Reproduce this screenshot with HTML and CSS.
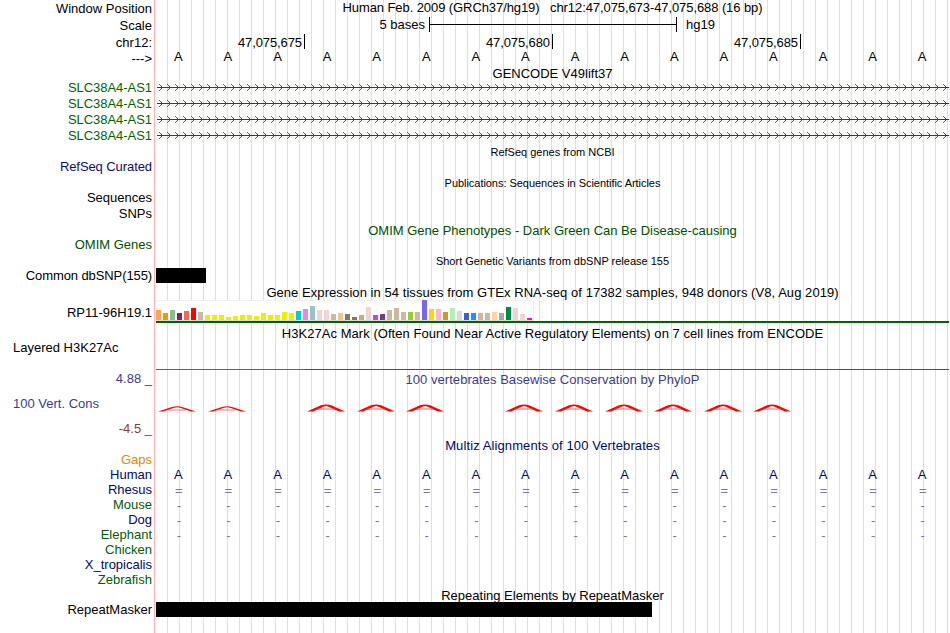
FILE: index.html
```html
<!DOCTYPE html>
<html lang="en">
<head>
<meta charset="utf-8">
<title>Genome Browser chr12:47,075,673-47,075,688</title>
<link rel="stylesheet" href="styles.css">
</head>
<body>
<main class="browser">
  <section class="labels">
    <div class="label gap1">Window Position</div>
    <div class="label gap2">Scale</div>
    <div class="label gap2">chr12:</div>
    <div class="label gap1">---&gt;</div>
    <div class="label gene gap14">SLC38A4-AS1</div>
    <div class="label gene gap1">SLC38A4-AS1</div>
    <div class="label gene gap1">SLC38A4-AS1</div>
    <div class="label gene gap1">SLC38A4-AS1</div>
    <div class="label refseq gap16">RefSeq Curated</div>
    <div class="label gap16">Sequences</div>
    <div class="label gap1">SNPs</div>
    <div class="label omim gap16">OMIM Genes</div>
    <div class="label tight gap16">Common dbSNP(155)</div>
    <div class="label gap22">RP11-96H19.1</div>
    <div class="label left gap20">Layered H3K27Ac</div>
    <div class="label cons gap16">4.88 _</div>
    <div class="label cons left gap10">100 Vert. Cons</div>
    <div class="label negative gap10">-4.5 _</div>
    <div class="label gaps gap16">Gaps</div>
    <div class="label navy">Human</div>
    <div class="label navy">Rhesus</div>
    <div class="label green">Mouse</div>
    <div class="label navy">Dog</div>
    <div class="label green">Elephant</div>
    <div class="label green">Chicken</div>
    <div class="label navy">X_tropicalis</div>
    <div class="label green">Zebrafish</div>
    <div class="label gap15">RepeatMasker</div>
  </section>
  <section class="plot">
    <div class="title t-position">Human Feb. 2009 (GRCh37/hg19) &nbsp; chr12:47,075,673-47,075,688 (16 bp)</div>
    <div class="scale"><span class="scale-size">5 bases</span><span class="scale-bar"></span><span>hg19</span></div>
    <div class="ruler"><span class="tick">47,075,675</span><span class="tick">47,075,680</span><span class="tick">47,075,685</span></div>
    <div class="bases" data-symbol="A"></div>
    <div class="title t-gencode">GENCODE V49lift37</div>
    <svg class="transcripts" width="793" height="64" viewBox="0 0 793 64" shape-rendering="crispEdges">
      <defs>
        <pattern id="chevrons" x="0" y="0" width="8" height="16" patternUnits="userSpaceOnUse">
          <path d="M3 3h1v1h-1zM4 4h1v1h-1zM4 8h1v1h-1zM3 9h1v1h-1z" fill="#2c802c"/>
          <path d="M5 5h1v1h-1zM5 7h1v1h-1z" fill="#106e10"/>
          <path d="M0 6h8v1h-8z" fill="#006400"/>
        </pattern>
      </defs>
      <rect x="1" width="792" height="64" fill="url(#chevrons)"/>
    </svg>
    <div class="title small t-refseq">RefSeq genes from NCBI</div>
    <div class="title small t-pubs">Publications: Sequences in Scientific Articles</div>
    <div class="title omim t-omim">OMIM Gene Phenotypes - Dark Green Can Be Disease-causing</div>
    <div class="title small t-dbsnp">Short Genetic Variants from dbSNP release 155</div>
    <div class="block snp"></div>
    <div class="title t-gtex">Gene Expression in 54 tissues from GTEx RNA-seq of 17382 samples, 948 donors (V8, Aug 2019)</div>
    <div class="gtex"><div class="gtex-bars" id="gtex"></div></div>
    <div class="title t-h3k">H3K27Ac Mark (Often Found Near Active Regulatory Elements) on 7 cell lines from ENCODE</div>
    <div class="h3k-line"></div>
    <div class="title cons t-phylop">100 vertebrates Basewise Conservation by PhyloP</div>
    <svg class="peaks" width="793" height="8" viewBox="156 404.5 793 8">
      <defs>
        <g id="low"><path d="M-19 412l14-4.4q5-1.7 10 0l14 4.4h-5l-11-3.8q-3-.7-6 0l-11 3.8z" fill="red"/><path d="M-9 410.5h18" stroke="#f44" stroke-width=".7"/></g>
        <g id="high"><path d="M-19 412l14-6.2q5-1.6 10 0l14 6.2h-6l-11-5q-2-.8-4 0l-11 5z" fill="red"/><path d="M-9 409.5h18" stroke="#f33" stroke-width=".8"/></g>
      </defs>
      <use href="#low" x="177"/><use href="#low" x="227"/>
      <use href="#high" x="326"/><use href="#high" x="376"/><use href="#high" x="425"/>
      <use href="#high" x="524"/><use href="#high" x="574"/><use href="#high" x="624"/>
      <use href="#high" x="673"/><use href="#high" x="723"/><use href="#high" x="772"/>
    </svg>
    <div class="title navy t-multiz">Multiz Alignments of 100 Vertebrates</div>
    <div class="bases navy human" data-symbol="A"></div>
    <div class="bases aligned" data-symbol="="></div>
    <div class="bases aligned" data-symbol="-"></div>
    <div class="bases aligned" data-symbol="-"></div>
    <div class="bases aligned" data-symbol="-"></div>
    <div class="title t-repeat">Repeating Elements by RepeatMasker</div>
    <div class="block repeat"></div>
  </section>
</main>
<script src="tracks.js"></script>
</body>
</html>
```
FILE: styles.css
```css
body {
  margin: 0;
  background: #fff;
  color: #000;
  font: 13px/15px "Liberation Sans", Arial, sans-serif;
}
.browser { display: flex; width: 950px; height: 633px; overflow: hidden; }

.labels { width: 152px; flex: none; margin-right: 2px; }
.label { height: 15px; text-align: right; white-space: nowrap; }
.left { text-align: left; padding-left: 13px; }
.tight { letter-spacing: -0.1px; }
.gap1 { margin-top: 1px; }
.gap2 { margin-top: 2px; }
.gap10 { margin-top: 10px; }
.gap14 { margin-top: 14px; }
.gap15 { margin-top: 15px; }
.gap16 { margin-top: 16px; }
.gap20 { margin-top: 20px; }
.gap22 { margin-top: 22px; }
.gene { color: #006400; letter-spacing: -0.05px; }
.refseq { color: #0c0c78; letter-spacing: -0.08px; }
.omim { color: #005000; }
.cons { color: #3c3c8c; }
.negative { color: #8c3c3c; }
.gaps { color: #e08a00; }
.navy { color: #000a64; }
.green { color: #005a0a; }

.plot {
  display: flex;
  flex-direction: column;
  width: 793px;
  flex: none;
  padding-left: 1px;
  border-left: 1px solid #ffb4b4;
  background: repeating-linear-gradient(to right, transparent 0 11px, #dcdcf8 11px 12px) 1px 0;
}
.plot > * { flex: none; }
.title { height: 15px; text-align: center; white-space: nowrap; }
.small { font-size: 11px; }

.t-position { letter-spacing: -0.085px; }
.scale { display: flex; height: 15px; margin-top: 2px; }
.scale-size { width: 269px; margin-right: 4px; text-align: right; }
.scale-bar {
  box-sizing: border-box;
  width: 248px;
  height: 15px;
  margin-right: 9px;
  border: solid #000;
  border-width: 0 1px;
  background: linear-gradient(#000, #000) 0 7px / 100% 1px no-repeat;
}
.ruler { display: flex; height: 15px; margin-top: 2px; letter-spacing: -0.1px; }
.tick {
  box-sizing: border-box;
  width: 248px;
  padding: 1px 2px 0 0;
  border-right: 1px solid #000;
  text-align: right;
}
.tick:first-child { width: 149px; }
.bases { display: grid; grid-template-columns: repeat(16, 49.6px); width: 793px; height: 15px; margin-left: -2.5px; text-align: center; }
.aligned { color: #7878aa; line-height: 17px; margin-left: -2px; }
.t-gencode { margin-top: 2px; }
.transcripts { display: block; }
.t-pubs { margin-top: 16px; letter-spacing: -0.04px; }
.t-omim { margin-top: 32px; }
.t-dbsnp { margin-top: 16px; }
.block { height: 15px; background: #000; }
.snp { width: 50px; margin-top: -1px; }
.t-gtex { margin-top: 2px; letter-spacing: 0.055px; }
.gtex { height: 21px; border-bottom: 2px solid #006400; }
.gtex-bars {
  box-sizing: border-box;
  display: flex;
  align-items: flex-end;
  gap: 2px;
  width: 378px;
  height: 21px;
  border-right: 1px solid #f0f0f0;
  border-bottom: 1px solid #d9d9d9;
  background: linear-gradient(#f0f0f0, #f0f0f0) 0 0 / 100% 1px no-repeat #fff;
}
.gtex-bar { width: 5px; flex: none; }
.t-h3k { margin-top: 3px; letter-spacing: 0.045px; }
.h3k-line { height: 1px; margin-top: 28px; background: linear-gradient(to right, #7040ff 149px, #6a3484 149px); }
.t-phylop { margin-top: 2px; letter-spacing: 0.04px; }
.peaks { display: block; margin-top: 17px; }
.t-multiz { margin-top: 26px; letter-spacing: 0.1px; }
.human { margin-top: 14px; }
.t-repeat { height: 14px; margin-top: 46px; }
.repeat { width: 496px; }
```
FILE: tracks.js
```js
document.querySelectorAll('.bases').forEach(function (row) {
  for (var i = 0; i < 16; i++) {
    var cell = document.createElement('span');
    cell.textContent = row.dataset.symbol;
    row.appendChild(cell);
  }
});

// Median expression per tissue: bar height in pixels, tissue colour.
var tissues = [
  [10, 'ffa54f'], [7, 'ee9a00'], [10, '8fbc8f'], [7, '8b1c62'], [9, 'ee6a50'], [12, 'ff0000'], [8, 'cdb79e'],
  [5, 'eeee00'], [5, 'eeee00'], [5, 'eeee00'], [3, 'eeee00'], [4, 'eeee00'], [5, 'eeee00'], [5, 'eeee00'],
  [4, 'eeee00'], [7, 'eeee00'], [5, 'eeee00'], [5, 'eeee00'], [8, 'eeee00'], [7, 'eeee00'],
  [9, '00cdcd'], [11, 'ee82ee'], [14, '9ac0cd'], [10, 'eed5d2'], [10, 'eed5d2'], [6, 'cdb79e'], [7, 'eec591'],
  [6, '8b7355'], [3, '8b7355'], [5, 'cdaa7d'], [13, 'eed5d2'], [5, 'b452cd'], [6, '7a378b'], [10, 'cdb79e'],
  [12, 'cdb79e'], [8, 'cdb79e'], [8, '9acd32'], [8, 'cdb79e'], [20, '7a67ee'], [11, 'ffd700'], [11, 'ffb6c1'],
  [8, 'cd9b1d'], [12, 'b4eeb4'], [9, 'd9d9d9'], [7, '3a5fcd'], [7, '1e90ff'], [7, 'cdb79e'], [7, 'cdb79e'],
  [8, 'ffd39b'], [7, 'a6a6a6'], [13, '008b45'], [12, 'eed5d2'], [6, 'eed5d2'], [2, 'ff00ff']
];
var chart = document.getElementById('gtex');
tissues.forEach(function (tissue) {
  var bar = document.createElement('span');
  bar.className = 'gtex-bar';
  bar.style.height = tissue[0] + 'px';
  bar.style.background = '#' + tissue[1];
  chart.appendChild(bar);
});
```
